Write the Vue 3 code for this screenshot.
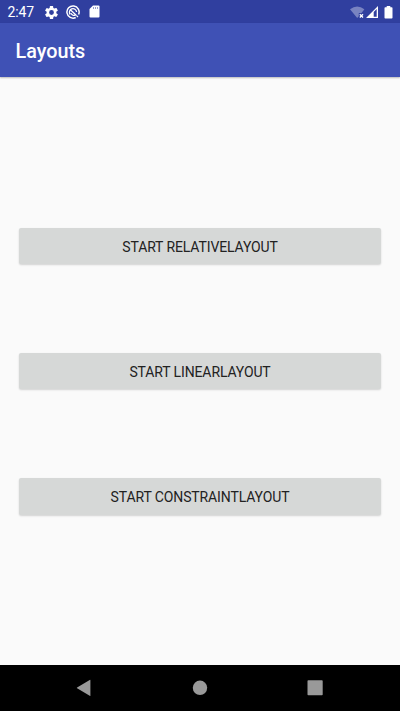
<script setup>
const buttons = ['START RELATIVELAYOUT', 'START LINEARLAYOUT', 'START CONSTRAINTLAYOUT']
</script>

<template>
  <div class="screen">
    <header class="status">
      <span class="time">2:47</span>
      <div class="notices">
        <svg class="gear" viewBox="2 2 20 20" width="13" height="13"><path fill="#fff" fill-rule="evenodd" d="M19.4 13a7.800 7.800 0 0 0 0-2l2.100-1.650a.5.5 0 0 0 .12-.64l-2-3.460a.5.5 0 0 0-.61-.22l-2.490 1a7.300 7.300 0 0 0-1.690-.98l-.38-2.650A.5.5 0 0 0 14 2h-4a.5.5 0 0 0-.49.420l-.38 2.650c-.61.25-1.170.59-1.690.98l-2.490-1a.5.5 0 0 0-.61.22l-2 3.460a.5.5 0 0 0 .12.640L4.570 11a7.900 7.900 0 0 0 0 2l-2.110 1.650a.5.5 0 0 0-.12.640l2 3.460c.12.220.39.300.61.220l2.490-1c.52.400 1.080.73 1.690.98l.38 2.650c.03.240.24.400.49.400h4c.25 0 .46-.18.49-.42l.38-2.650c.61-.25 1.170-.59 1.690-.98l2.490 1c.23.090.49 0 .61-.22l2-3.460a.5.5 0 0 0-.12-.64zM12 15.700a3.700 3.700 0 1 1 0-7.400 3.700 3.700 0 0 1 0 7.400z"/></svg>
        <svg class="ring" viewBox="0 0 14 14" width="14" height="14" fill="none" stroke="#fff">
          <path stroke-width="1.500" d="M9.700 12.500A6.100 6.100 0 1 1 12.600 9.500"/>
          <path stroke-width="1.300" d="M4.200 9.500A3.600 3.600 0 1 1 10.600 7M4.600 5L10.200 10.300M5 8.300C6 10.700 8.400 10.700 9.400 9.700"/>
          <path stroke-width="1.200" d="M10.300 10.300L12 12"/>
        </svg>
        <svg class="card" viewBox="0 0 11 13" width="11" height="13"><path fill="#fff" d="M4 .5h5.500a1 1 0 0 1 1 1v10a1 1 0 0 1-1 1h-8a1 1 0 0 1-1-1V4z"/><path stroke="#303f9f" stroke-width=".5" d="M4.500 2v2M6.500 2v2M8.500 2v2"/></svg>
      </div>
      <div class="system">
        <svg class="wifi" viewBox="0 0 15 13" width="15" height="13"><path fill="#7983c1" d="M0 3.200Q7.200-2.200 14.400 3.200L11.500 6.900H8.800V10.200L7.200 12z"/><path stroke="#fff" stroke-width="1.300" d="M9.800 8.300l3.200 3.200M13 8.300l-3.200 3.200"/></svg>
        <svg class="signal" viewBox="0 0 12 12" width="12" height="12"><path fill="#fff" fill-rule="evenodd" d="M12 0v12H0zM10.700 3.100L7.700 6.100v4.600h3z"/></svg>
        <svg class="battery" viewBox="0 0 9 13" width="9" height="13"><path fill="#fff" d="M2.700 0h3.600v1.300h1.400a.8.8 0 0 1 .8.8v9.600a.8.8 0 0 1-.8.8H1.300a.8.8 0 0 1-.8-.8V2.100a.8.8 0 0 1 .8-.8h1.400z"/></svg>
      </div>
    </header>
    <div class="toolbar"><h1>Layouts</h1></div>
    <main>
      <button v-for="label in buttons" :key="label">{{ label }}</button>
    </main>
    <nav>
      <svg viewBox="0 0 16 18" width="16" height="18"><path fill="#999" d="M14.400 1.300v15.100q0 .8-.7.400L1.100 9.300q-.7-.4 0-.8L13.700.9q.7-.4.7.4z"/></svg>
      <svg viewBox="0 0 16 18" width="16" height="18"><circle cx="8" cy="8.800" r="7.200" fill="#999"/></svg>
      <svg viewBox="0 0 16 18" width="16" height="18"><rect x=".5" y="1.200" width="15.200" height="15" rx=".8" fill="#999"/></svg>
    </nav>
  </div>
</template>

<style>
body { margin: 0; }
</style>

<style scoped>
.screen {
  width: 400px;
  height: 711px;
  display: flex;
  flex-direction: column;
  overflow: hidden;
  background: #fafafa;
  font-family: Roboto, sans-serif;
}
svg { display: block; flex: none; }
.status {
  height: 23.400px;
  flex: none;
  display: flex;
  align-items: flex-start;
  background: #303f9f;
  color: #fff;
}
.time {
  width: 37.500px;
  padding-left: 7.500px;
  font-size: 14px;
  line-height: 24px;
  letter-spacing: -0.100px;
}
.notices { display: flex; padding-top: 5px; }
.gear { margin-top: .5px; }
.ring { margin-left: 8px; }
.card { margin-left: 9px; }
.system { display: flex; padding-top: 5.500px; margin-left: auto; margin-right: 7.500px; }
.signal { margin-left: 1px; }
.battery { margin-left: 6px; }
.toolbar {
  height: 54.100px;
  flex: none;
  display: flex;
  align-items: center;
  padding-left: 15.500px;
  background: #3f51b5;
  box-shadow: 0 1px 1.500px rgba(0, 0, 0, .25);
}
h1 {
  margin: 0;
  padding-top: 3px;
  color: #fff;
  font-size: 19.800px;
  font-weight: 500;
  line-height: 24px;
}
main {
  flex: 1;
  display: flex;
  flex-direction: column;
  align-items: center;
  gap: 89px;
  padding-top: 150.500px;
}
button {
  width: 362px;
  height: 36.200px;
  padding: 1px 0 0;
  border: 0;
  border-radius: 2px;
  background: #d6d8d7;
  box-shadow: 0 1px 2px rgba(0, 0, 0, .16);
  color: #222;
  font: 400 14px/36px Roboto, sans-serif;
  letter-spacing: -0.120px;
}
nav {
  height: 46.500px;
  flex: none;
  display: flex;
  justify-content: space-between;
  padding: 14px 77px 0 76px;
  box-sizing: border-box;
  background: #000;
}
</style>
